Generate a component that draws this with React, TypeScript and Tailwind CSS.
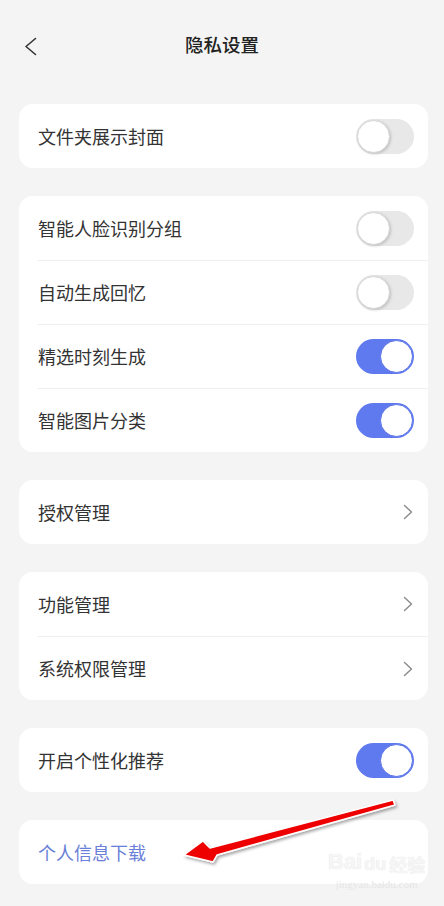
import React from "react";

const font = { fontFamily: '"Noto Sans CJK SC", "Noto Sans", sans-serif' };

function Toggle({ on }: { on: boolean }) {
  return on ? (
    <div className="w-[58px] h-[35px] rounded-full bg-[#5f79ef] flex items-center justify-end pr-[1px]">
      <div className="w-[33px] h-[33px] rounded-full bg-white border border-[#5b73e6]" />
    </div>
  ) : (
    <div className="w-[58px] h-[35px] rounded-full bg-[#e8e8e8] flex items-center pl-[1px]">
      <div className="w-[33px] h-[33px] rounded-full bg-white border border-[#d6d6d6] shadow-[1px_1px_3px_rgba(0,0,0,0.18)]" />
    </div>
  );
}

function Chevron() {
  return (
    <svg width="10" height="16" viewBox="0 0 10 16" className="mr-[1px]">
      <path d="M1.5 1.5 L8.5 8 L1.5 14.5" fill="none" stroke="#8a8a8a" strokeWidth="1.4" strokeLinecap="round" strokeLinejoin="round" />
    </svg>
  );
}

function Row({ label, right, divider, labelClass }: { label: string; right?: React.ReactNode; divider?: boolean; labelClass?: string }) {
  return (
    <div className="h-[64px] flex flex-col">
      {divider && <div className="ml-[19px] h-px bg-[#efefef]" />}
      <div className="flex-1 flex items-center justify-between pl-[19px] pr-[14px]">
        <span className={labelClass ?? "text-[18px] text-[#333333]"}>{label}</span>
        {right}
      </div>
    </div>
  );
}

function Card({ children }: { children: React.ReactNode }) {
  return <div className="ml-[19px] w-[409px] bg-white rounded-[14px] overflow-hidden">{children}</div>;
}

export default function App() {
  return (
    <div className="w-[444px] h-[906px] bg-[#f4f4f4] relative overflow-hidden" style={font}>
      <div className="h-[90px] relative flex items-center justify-center">
        <svg width="14" height="19" viewBox="0 0 14 19" className="absolute left-[24px] top-[37px]">
          <path d="M11.5 1.5 L2 9.5 L11.5 17.5" fill="none" stroke="#333333" strokeWidth="1.6" strokeLinecap="round" strokeLinejoin="round" />
        </svg>
        <span className="text-[18.5px] font-medium text-[#222222]">隐私设置</span>
      </div>

      <div className="pt-[14px] flex flex-col gap-[28px]">
        <Card>
          <Row label="文件夹展示封面" right={<Toggle on={false} />} />
        </Card>
        <Card>
          <Row label="智能人脸识别分组" right={<Toggle on={false} />} />
          <Row label="自动生成回忆" right={<Toggle on={false} />} divider />
          <Row label="精选时刻生成" right={<Toggle on={true} />} divider />
          <Row label="智能图片分类" right={<Toggle on={true} />} divider />
        </Card>
        <Card>
          <Row label="授权管理" right={<Chevron />} />
        </Card>
        <Card>
          <Row label="功能管理" right={<Chevron />} />
          <Row label="系统权限管理" right={<Chevron />} divider />
        </Card>
        <Card>
          <Row label="开启个性化推荐" right={<Toggle on={true} />} />
        </Card>
        <Card>
          <Row label="个人信息下载" labelClass="text-[18px] text-[#6a80d8]" />
        </Card>
      </div>

      {/* watermark */}
      <div className="absolute left-[328px] top-[851px] flex flex-col items-center text-[#f6f6f6] pointer-events-none" style={{ textShadow: "0 0 1px #dddddd" }}>
        <div className="flex items-end leading-none">
          <span className="text-[22px] font-bold" style={{ fontFamily: '"Liberation Sans", sans-serif' }}>Bai</span>
          <span className="text-[18px] font-bold ml-[2px]" style={{ fontFamily: '"Liberation Sans", sans-serif' }}>du</span>
          <span className="text-[18px] font-bold ml-[3px]">经验</span>
        </div>
        <span className="text-[11px] leading-none mt-[6px] text-[#e6e6e6]" style={{ fontFamily: '"Liberation Serif", serif', textShadow: "none" }}>jingyan.baidu.com</span>
      </div>

      {/* red arrow */}
      <svg className="absolute left-0 top-0 pointer-events-none" width="444" height="906" viewBox="0 0 444 906">
        <defs>
          <filter id="sh" x="-10%" y="-50%" width="120%" height="200%">
            <feDropShadow dx="1.5" dy="2" stdDeviation="1.5" floodColor="#000" floodOpacity="0.35" />
          </filter>
        </defs>
        <polygon
          points="393,800 395,805 217,855 213,862 184,855 203,841 210,848"
          fill="#ee0000"
          stroke="#ffffff"
          strokeWidth="1.5"
          strokeLinejoin="round"
          filter="url(#sh)"
        />
      </svg>
    </div>
  );
}
